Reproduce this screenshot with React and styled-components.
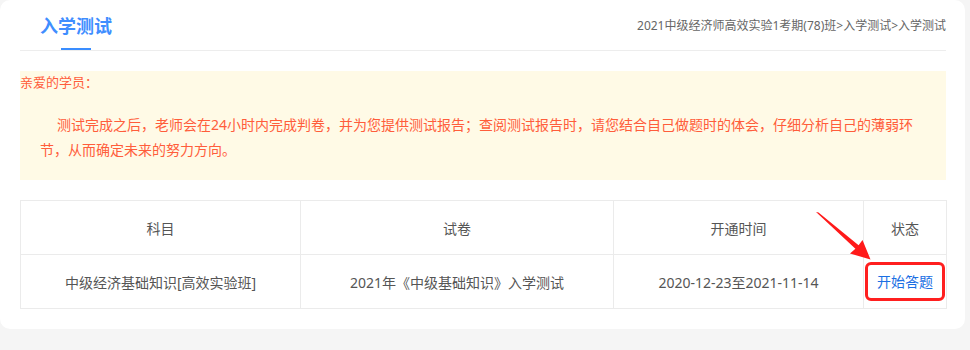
import React from "react";
import styled, { createGlobalStyle } from "styled-components";

const GlobalStyle = createGlobalStyle`
    html, body {
        margin: 0;
        padding: 0;
        background: #f5f5f5;
    }
    body {
        font-family: "Noto Sans", "Noto Sans CJK SC", sans-serif;
    }
`;

const columns = [
    { title: "科目", width: 280 },
    { title: "试卷", width: 313 },
    { title: "开通时间", width: 250 },
    { title: "状态", width: 83 },
];

const rows = [
    {
        subject: "中级经济基础知识[高效实验班]",
        paper: "2021年《中级基础知识》入学测试",
        time: "2020-12-23至2021-11-14",
    },
];

export default function App() {
    return (
        <>
            <GlobalStyle />
            <Card>
                <Header>
                    <Tab>
                        <span>入学测试</span>
                        <TabBar />
                    </Tab>
                    <Crumbs>2021中级经济师高效实验1考期(78)班&gt;入学测试&gt;入学测试</Crumbs>
                </Header>

                <Notice>
                    <Greeting>亲爱的学员：</Greeting>
                    <NoticeText>
                        测试完成之后，老师会在24小时内完成判卷，并为您提供测试报告；查阅测试报告时，请您结合自己做题时的体会，仔细分析自己的薄弱环节，从而确定未来的努力方向。
                    </NoticeText>
                </Notice>

                <TableWrap>
                    <Table>
                        <colgroup>
                            {columns.map((c) => (
                                <col key={c.title} style={{ width: c.width }} />
                            ))}
                        </colgroup>
                        <thead>
                            <tr>
                                {columns.map((c) => (
                                    <Th key={c.title}>{c.title}</Th>
                                ))}
                            </tr>
                        </thead>
                        <tbody>
                            {rows.map((r) => (
                                <tr key={r.paper}>
                                    <Td>{r.subject}</Td>
                                    <Td>{r.paper}</Td>
                                    <Td>{r.time}</Td>
                                    <Td>
                                        <StartLink href="#">开始答题</StartLink>
                                    </Td>
                                </tr>
                            ))}
                        </tbody>
                    </Table>
                    <Arrow width="70" height="60" viewBox="0 0 70 60">
                        <polygon
                            points="6,7 8.5,7.5 48.6,40.2 52.5,35 60.5,54.5 40,48.5 45.4,43.8"
                            fill="#ff1a1a"
                        />
                    </Arrow>
                </TableWrap>
            </Card>
        </>
    );
}

const Card = styled.div`
    width: 965px;
    box-sizing: border-box;
    padding: 0 19px 20px 20px;
    background: #fff;
    border-radius: 10px;
`;

const Header = styled.div`
    height: 50px;
    display: flex;
    align-items: center;
    justify-content: space-between;
    border-bottom: 1px solid #ededed;
`;

const Tab = styled.div`
    height: 50px;
    margin-left: 20px;
    display: flex;
    flex-direction: column;
    align-items: center;
    justify-content: flex-end;

    span {
        font-size: 18px;
        line-height: 24px;
        font-weight: bold;
        color: #3f8eff;
    }
`;

const TabBar = styled.div`
    width: 30px;
    height: 2px;
    margin-top: 10px;
    background: #3a8dff;
`;

const Crumbs = styled.div`
    font-size: 12px;
    color: #666;
`;

const Notice = styled.div`
    margin-top: 20px;
    padding-bottom: 18px;
    background: #fffae6;
    color: #ff5d3b;
`;

const Greeting = styled.div`
    font-size: 13px;
    line-height: 22px;
`;

const NoticeText = styled.p`
    margin: 19px 0 0;
    padding-left: 20px;
    width: 880px;
    font-size: 14px;
    line-height: 25px;
    text-indent: 17px;
`;

const TableWrap = styled.div`
    position: relative;
    margin-top: 20px;
`;

const Table = styled.table`
    width: 100%;
    table-layout: fixed;
    border-collapse: collapse;
    font-size: 14px;
    color: #555;
`;

const Th = styled.th`
    height: 53px;
    padding: 0;
    font-weight: normal;
    text-align: center;
    border: 1px solid #ebebeb;
`;

const Td = styled.td`
    height: 53px;
    padding: 0;
    text-align: center;
    border: 1px solid #ebebeb;
`;

const StartLink = styled.a`
    display: inline-block;
    padding: 0 9px;
    line-height: 33px;
    color: #1b6fe3;
    text-decoration: none;
    border: 3px solid #ff1f1f;
    border-radius: 6px;
`;

const Arrow = styled.svg`
    position: absolute;
    left: 790px;
    top: 5px;
`;
